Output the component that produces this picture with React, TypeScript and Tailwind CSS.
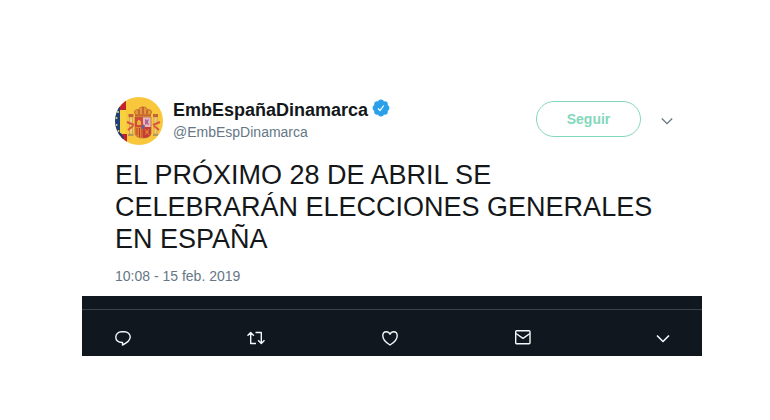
import type { ReactNode } from "react";

function Avatar() {
  return (
    <svg viewBox="0 0 48 48" className="size-12 shrink-0" role="img" aria-label="Escudo de España">
      <defs>
        <clipPath id="avatar-circle">
          <circle cx="24" cy="24" r="24" />
        </clipPath>
      </defs>
      <g clipPath="url(#avatar-circle)">
        <rect width="48" height="48" fill="#f8c73c" />
        <rect width="11" height="13" fill="#c4232b" />
        <rect y="37" width="12" height="12" fill="#c4232b" />
        <path d="M0 0h5v48H0z" fill="#1d3f7c" />
        <path d="M5 13h6v24H5z" fill="#f6d23f" />
        <path d="M0 36h6l3 5-2 4-7-3z" fill="#1d3f7c" />
        <g fill="#e8d977">
          <circle cx="3" cy="15" r="1" />
          <circle cx="1.500" cy="21" r="1" />
          <circle cx="1.500" cy="28" r="1" />
          <circle cx="3.500" cy="34" r="1" />
        </g>
        {/* pillars */}
        <g fill="#eecf7c" stroke="#c98a45" strokeWidth=".6">
          <rect x="14.500" y="20" width="3" height="17" />
          <rect x="39" y="20" width="3" height="17" />
        </g>
        <g fill="#c4633a">
          <path d="M13.500 17h5v3h-5zM38 17h5v3h-5z" />
        </g>
        <g fill="#b39a58">
          <rect x="13" y="37" width="5.500" height="2" />
          <rect x="38" y="37" width="5.500" height="2" />
        </g>
        <path d="M12 25l7 3M45 25l-7 3M13 33l5-4M44 33l-5-4" stroke="#d8573f" strokeWidth="2" />
        {/* crown */}
        <path d="M21 18c-3-3-1-6 2-5 1-2 3-3 5-3s4 1 5 3c3-1 5 2 2 5z" fill="#e09a38" stroke="#bb5a30" strokeWidth=".8" />
        <path d="M24 17v-4m4 4v-7m4 7v-4" fill="none" stroke="#b9452d" strokeWidth="1.200" />
        <path d="M20 17.500h16v2H20z" fill="#c9682c" />
        {/* quartered shield */}
        <path d="M20 20h8v10h-8z" fill="#d24a3c" />
        <path d="M28 20h8v10h-8z" fill="#e3b9c4" />
        <path d="M20 30h8v11c-5 0-8-2-8-5z" fill="#dc8a31" />
        <path d="M28 30h8v6c0 3-3 5-8 5z" fill="#c63b38" />
        <path d="M22 31v7m2.500-7v9m2.500-9v9" stroke="#c33931" strokeWidth="1" />
        <path d="M22 28v-4h1v-1h2v1h1v4z" fill="#e9b13b" />
        <path d="M30 22l2 1 2-1-1 3 1 3-3-1-1 1z" fill="#b06596" />
        <path d="M30 32l4 6m0-6l-4 6m0-3h4" stroke="#e2a03c" strokeWidth=".7" />
        <ellipse cx="28" cy="30" rx="1.800" ry="2.300" fill="#5867a0" stroke="#d24b46" strokeWidth=".8" />
        <path d="M20 20h16v16c0 3-3 5-8 5s-8-2-8-5z" fill="none" stroke="#b8603a" strokeWidth=".7" />
      </g>
    </svg>
  );
}

function Verified() {
  return (
    <svg viewBox="0 0 18 18" className="size-[18px] shrink-0" role="img" aria-label="Cuenta verificada">
      <g fill="#2ba0ea">
        <circle cx="9" cy="9" r="6.500" />
        <circle cx="9" cy="3.600" r="3" />
        <circle cx="12.800" cy="5.200" r="3" />
        <circle cx="14.400" cy="9" r="3" />
        <circle cx="12.800" cy="12.800" r="3" />
        <circle cx="9" cy="14.400" r="3" />
        <circle cx="5.200" cy="12.800" r="3" />
        <circle cx="3.600" cy="9" r="3" />
        <circle cx="5.200" cy="5.200" r="3" />
      </g>
      <path d="M6 9.500l2 2 3.800-5" fill="none" stroke="#fff" strokeWidth="1.200" />
    </svg>
  );
}

function Action({ label, className = "w-5", children }: { label: string; className?: string; children: ReactNode }) {
  return (
    <button type="button" aria-label={label} className={`flex h-5 items-center justify-end ${className}`}>
      <svg viewBox="0 0 20 20" className="size-5 shrink-0" fill="none" stroke="#f5f8fa" strokeWidth="1.400" strokeLinejoin="round">
        {children}
      </svg>
    </button>
  );
}

export default function App() {
  return (
    <main className="bg-white pt-[97px] pr-[68px] pb-16 pl-[82px] font-['Liberation_Sans',Arial,sans-serif]">
      <article>
        <div className="pr-[29px] pl-[33px]">
          <header className="flex items-start">
            <Avatar />
            <div className="ml-[10px] min-w-0 flex-1">
              <div className="flex items-start gap-1 pt-[2px]">
                <h1 className="text-lg leading-[22px] font-bold text-[#14171a]">EmbEspañaDinamarca</h1>
                <Verified />
              </div>
              <p className="text-sm leading-[22px] text-[#657786]">@EmbEspDinamarca</p>
            </div>
            <button
              type="button"
              className="mt-1 h-9 w-[105px] rounded-full border border-[#83d8bb] text-sm font-bold text-[#83d8bb]"
            >
              Seguir
            </button>
            <button type="button" aria-label="Más opciones" className="mt-4 ml-5 flex h-4 w-3 items-center">
              <svg viewBox="0 0 12 8" className="h-2 w-3" fill="none" stroke="#66757f" strokeWidth="1.300">
                <path d="M.800 1.500L6 6.700l5.200-5.200" />
              </svg>
            </button>
          </header>
          <p className="mt-[14px] text-[27px] leading-8 text-[#14171a]">
            EL PRÓXIMO 28 DE ABRIL SE CELEBRARÁN ELECCIONES GENERALES EN ESPAÑA
          </p>
          <time dateTime="2019-02-15T10:08" className="mt-[10px] block pb-[9px] text-sm leading-[22px] text-[#657786]">
            10:08 - 15 feb. 2019
          </time>
        </div>
        <footer className="bg-[#10171e] pt-[13px]">
          <div className="flex h-[47px] items-center justify-between border-t border-[#3a4248] pt-[10px] pr-[29px] pl-[31px]">
            <Action label="Responder">
              <path d="M9.500 17v-2.500C5.300 14.300 2.800 12.400 2.800 9.200 2.800 6 5.400 3.800 8.500 3.800h3c3.100 0 5.700 2.200 5.700 5.200 0 3.500-3.500 6-7.700 8z" />
            </Action>
            <Action label="Retuitear">
              <path d="M1.500 7.700L4.700 4.500l3.200 3.200M4.700 4.700v10.800h5.300M9.500 4.500h5.800v10.800M12.100 12.300l3.200 3.200 3.200-3.200" />
            </Action>
            <Action label="Me gusta">
              <path d="M10 17C7 15.300 2.800 11.500 2.800 7.800c0-2.500 1.600-4 3.600-4 1.600 0 2.900.9 3.600 2.500.7-1.600 2-2.500 3.600-2.500 2 0 3.600 1.500 3.600 4C17.200 11.500 13 15.300 10 17z" />
            </Action>
            <Action label="Mensaje directo">
              <rect x="2.700" y="2.700" width="14.300" height="13" rx="1" />
              <path d="M3 5.500l7 4.800 7-4.800" />
            </Action>
            <Action label="Más" className="w-[27px]">
              <path d="M4 7.500l6 6 6-6" strokeWidth="1.600" />
            </Action>
          </div>
        </footer>
      </article>
    </main>
  );
}
